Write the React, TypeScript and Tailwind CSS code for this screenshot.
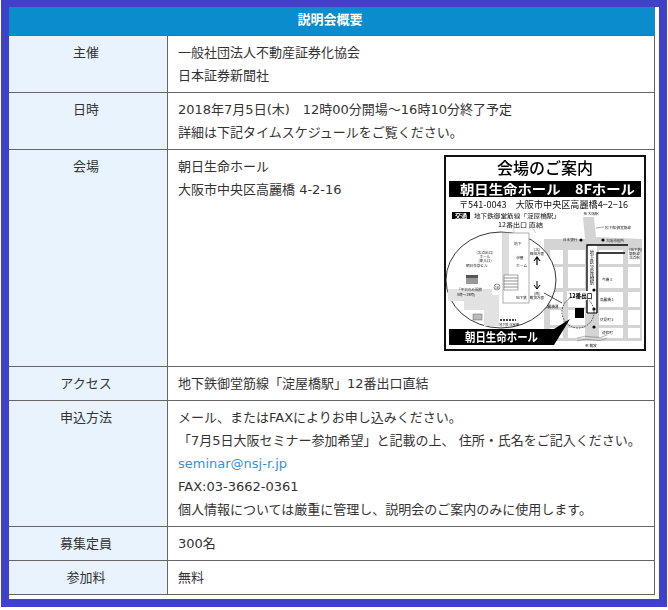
import type { ReactNode } from "react"

const font = { fontFamily: "'DejaVu Sans', 'Noto Sans CJK JP', sans-serif" }

function Row({ label, children }: { label: string; children: ReactNode }) {
  return (
    <div className="flex border-b border-[#666]">
      <div className="w-[159px] shrink-0 border-r border-[#666] bg-[#e8f3fe] py-[5px] pr-1 text-center">{label}</div>
      <div className="flex-1 border-r border-[#666] py-[5px] pl-[10px]">{children}</div>
    </div>
  )
}

function Tiny({ x, y, s = 3.6, children, anchor }: { x: number; y: number; s?: number; children: string; anchor?: "middle" }) {
  return (
    <text x={x} y={y} fontSize={s} fill="#222" textAnchor={anchor}>
      {children}
    </text>
  )
}

// 案内図 (coordinates are px inside the 202x196 map)
function VenueMap() {
  const cols = [[106, 13], [124, 17], [155, 24], [184, 12]]
  const rows = [[95, 14], [112, 21], [137, 15], [155, 15], [173, 10]]
  const station: [string, number][] = [["地", 99], ["下", 103.5], ["鉄", 108], ["淀", 114], ["屋", 119], ["橋", 124], ["駅", 129]]
  return (
    <svg viewBox="0 0 202 196" className="h-[196px] w-[202px] shrink-0 blur-[0.4px]" style={{ fontFamily: "'Noto Sans CJK JP', sans-serif" }}>
      <rect x="1" y="1" width="200" height="194" fill="#fff" stroke="#111" strokeWidth="2" />
      <text x="101" y="18.5" fontSize="16" fill="#000" textAnchor="middle" fontWeight="500">会場のご案内</text>
      <rect x="5" y="26" width="192" height="16" fill="#000" />
      <text x="16" y="38.5" fontSize="13" fill="#fff" fontWeight="700" textLength="175" lengthAdjust="spacingAndGlyphs">朝日生命ホール　8Fホール</text>
      <text x="15" y="52.5" fontSize="9.5" fill="#111" textLength="169" lengthAdjust="spacingAndGlyphs">〒541-0043　大阪市中央区高麗橋4−2−16</text>
      <rect x="8" y="57" width="18" height="7" fill="#000" />
      <text x="17" y="63" fontSize="6" fill="#fff" textAnchor="middle" fontWeight="700">交通</text>
      <text x="30" y="63" fontSize="6" fill="#111" textLength="86" lengthAdjust="spacingAndGlyphs">地下鉄御堂筋線「淀屋橋駅」</text>
      <text x="54" y="71.5" fontSize="6" fill="#111" textLength="45" lengthAdjust="spacingAndGlyphs">12番出口 直結</text>

      {/* 道路 */}
      <rect x="100" y="90" width="98" height="96" fill="#d4d4d4" />
      <polygon points="139,62 150,62 152,82 198,84 198,90 100,90 100,84 141,84" fill="#d4d4d4" />
      {cols.flatMap(([x, w]) =>
        rows.map(([y, h]) => <rect key={x + "-" + y} x={x} y={y} width={w} height={h} fill="#fff" />)
      )}
      <Tiny x={147} y={60} anchor="middle">至 大阪駅</Tiny>
      <path d="M152 73 L160 72" stroke="#555" strokeWidth="0.5" />
      <Tiny x={161} y={74}>松下館 御堂筋線</Tiny>
      <Tiny x={119} y={86}>日本銀行</Tiny>
      <circle cx="137" cy="85" r="1.6" fill="#000" />
      <circle cx="159" cy="85" r="1.6" fill="#000" />
      <Tiny x={162} y={87}>大阪市役所</Tiny>
      <Tiny x={185} y={96}>(地下鉄)</Tiny>
      <Tiny x={185} y={100}>堺筋線</Tiny>
      <Tiny x={185} y={104}>北浜駅</Tiny>

      {/* 経路 */}
      <rect x="143" y="90" width="10" height="68" fill="#fff" />
      <path d="M143 158 V90 H184" fill="none" stroke="#000" strokeWidth="1.3" />
      <path d="M153 158 V98 H181" fill="none" stroke="#000" strokeWidth="1.3" />
      <path d="M143 158 H153" stroke="#000" strokeWidth="1" />
      {station.map(([c, y]) => (
        <text key={c} x="148" y={y} fontSize="4.4" fill="#222" textAnchor="middle">{c}</text>
      ))}
      <rect x="123" y="136" width="29" height="9" fill="#fff" />
      <text x="125" y="143" fontSize="5.6" fill="#000" fontWeight="700">12番出口</text>
      <circle cx="150" cy="135" r="1.6" fill="#000" />
      <circle cx="150" cy="154" r="1.6" fill="#000" />
      <circle cx="150" cy="172" r="1.6" fill="#000" />
      <Tiny x={158} y={126}>今橋 3</Tiny>
      <Tiny x={156} y={146}>高麗橋 3</Tiny>
      <Tiny x={156} y={166}>伏見町 3</Tiny>
      <Tiny x={158} y={179}>道修町</Tiny>
      <Tiny x={141} y={192}>至 難波</Tiny>
      <Tiny x={100} y={153}>高麗橋通</Tiny>
      <path d="M133 183 q8 -3 16 -1 t14 -2 M133 186 q8 -3 16 -1 t14 -2" fill="none" stroke="#666" strokeWidth="0.5" />

      {/* 会場 */}
      <rect x="131" y="153" width="9" height="10" fill="#000" />
      <circle cx="134" cy="157" r="16" fill="none" stroke="#333" strokeWidth="0.9" strokeDasharray="1.6 1.2" />

      {/* 拡大図 */}
      <ellipse cx="57" cy="125" rx="55" ry="48" fill="#fff" stroke="#222" strokeWidth="0.9" />
      <path d="M100 138 L118 148" stroke="#222" strokeWidth="0.8" />
      <rect x="59" y="78" width="26" height="70" fill="#fff" stroke="#999" strokeWidth="0.8" />
      <rect x="59" y="78" width="6" height="44" fill="#ddd" />
      <rect x="60" y="120" width="14" height="15" fill="#fff" stroke="#555" strokeWidth="0.5" />
      <path d="M60 123 H74 M60 126 H74 M60 129 H74 M60 132 H74" stroke="#444" strokeWidth="0.6" />
      <polygon points="4,134 48,134 48,140 55,140 55,171 40,171 40,155 20,155 20,146 4,146" fill="#e2e2e2" />
      <rect x="29" y="159" width="9" height="6" fill="#bbb" stroke="#444" strokeWidth="0.4" />
      <rect x="22" y="120" width="12" height="9" fill="#999" />
      <rect x="22" y="120" width="12" height="3" fill="#555" />
      <path d="M70 68 V78 M85 68 L92 78" stroke="#aaa" strokeWidth="0.6" />
      <text x="70" y="90" fontSize="3.8" fill="#222">地下</text>
      <text x="72" y="104" fontSize="3.8" fill="#222">淀屋</text>
      <text x="72" y="112" fontSize="3.8" fill="#222">ホーム</text>
      <Tiny x={41} y={99} anchor="middle">(北浜出口)</Tiny>
      <Tiny x={41} y={103} anchor="middle">ホール</Tiny>
      <Tiny x={41} y={107} anchor="middle">(東入口)</Tiny>
      <Tiny x={22} y={112}>朝日生命ビル</Tiny>
      <text x="13" y="135.5" fontSize="3.6" fill="#222">「平日のみ開放</text>
      <text x="13" y="140.5" fontSize="3.6" fill="#222">8時〜19時」</text>
      <circle cx="53" cy="132" r="3" fill="#fff" stroke="#333" strokeWidth="0.5" />
      <text x="53" y="133.5" fontSize="3.4" fill="#222" textAnchor="middle">16</text>
      <Tiny x={72} y={144}>地下鉄</Tiny>
      <path d="M56 165 h16" stroke="#000" strokeWidth="1.5" strokeDasharray="2 1" />
      <Tiny x={55} y={171} s={3.2}>地下鉄 淀屋橋</Tiny>
      <Tiny x={93} y={96} anchor="middle">(北)</Tiny>
      <Tiny x={93} y={100} anchor="middle">梅田方面</Tiny>
      <path d="M93 102 V110 M90 106 L93 102 L96 106" fill="none" stroke="#000" strokeWidth="1.2" />
      <path d="M93 126 V134 M90 130 L93 134 L96 130" fill="none" stroke="#000" strokeWidth="1" />
      <Tiny x={93} y={140} anchor="middle">(南)</Tiny>
      <Tiny x={93} y={144} anchor="middle">難波方面</Tiny>

      {/* 会場名 */}
      <polygon points="5,174 110,174 126,164 110,190 5,190" fill="#000" />
      <text x="21" y="187" fontSize="12" fill="#fff" fontWeight="700" textLength="73" lengthAdjust="spacingAndGlyphs">朝日生命ホール</text>
    </svg>
  )
}

export default function App() {
  return (
    <div className="h-[610px] bg-white px-px text-[13px] leading-[23px] text-[#333]" style={font}>
      <div className="h-[607px] border-x-8 border-t-[7px] border-b-8 border-[#3f42c8] pr-1">
        <div className="h-[29px] border-b border-[#666] bg-[#0b8ccc] pr-1 text-center text-[13px] leading-[26px] font-bold text-white">説明会概要</div>
        <Row label="主催">
          <p>一般社団法人不動産証券化協会</p>
          <p>日本証券新聞社</p>
        </Row>
        <Row label="日時">
          <p>2018年7月5日(木)　12時00分開場～16時10分終了予定</p>
          <p>詳細は下記タイムスケジュールをご覧ください。</p>
        </Row>
        <Row label="会場">
          <div className="flex justify-between pr-2 pb-[10px]">
            <div>
              <p>朝日生命ホール</p>
              <p>大阪市中央区高麗橋 4-2-16</p>
            </div>
            <VenueMap />
          </div>
        </Row>
        <Row label="アクセス">
          <p>地下鉄御堂筋線「淀屋橋駅」12番出口直結</p>
        </Row>
        <Row label="申込方法">
          <p>メール、またはFAXによりお申し込みください。</p>
          <p>「7月5日大阪セミナー参加希望」と記載の上、 住所・氏名をご記入ください。</p>
          <a href="#" className="block text-[#3a8fd6]">seminar@nsj-r.jp</a>
          <p>FAX:03-3662-0361</p>
          <p>個人情報については厳重に管理し、説明会のご案内のみに使用します。</p>
        </Row>
        <Row label="募集定員">
          <p>300名</p>
        </Row>
        <Row label="参加料">
          <p>無料</p>
        </Row>
      </div>
    </div>
  )
}
